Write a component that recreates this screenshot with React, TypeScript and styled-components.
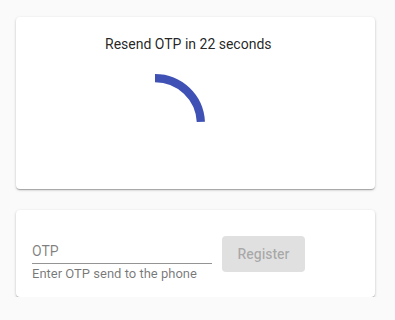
import styled, { createGlobalStyle } from 'styled-components'

const GlobalStyle = createGlobalStyle`
  html, body {
    margin: 0;
    padding: 0;
    background-color: #fafafa;
    font-family: Roboto, "Liberation Sans", sans-serif;
  }
`

const Page = styled.div`
  padding: 17px 20px 0 16px;
`

const Card = styled.div<{ $gap?: number }>`
  background-color: #fff;
  border-radius: 4px;
  box-shadow: 0px 1px 3px 0px rgba(0, 0, 0, 0.2), 0px 1px 1px 0px rgba(0, 0, 0, 0.14),
    0px 2px 1px -1px rgba(0, 0, 0, 0.12);
  margin-bottom: ${(p) => p.$gap ?? 0}px;
`

const TimerBody = styled.div`
  display: flex;
  flex-direction: column;
  align-items: flex-start;
  padding: 17px 16px 15px 89px;
`

const Countdown = styled.div`
  font-size: 14px;
  line-height: 20px;
  color: rgba(0, 0, 0, 0.87);
`

const Spinner = styled.svg`
  display: block;
  margin-top: 20px;
  width: 100px;
  height: 100px;
  color: #3f51b5;
`

const FormRow = styled.div`
  display: flex;
  align-items: flex-start;
  padding: 26px 16px 15px;
`

const Field = styled.div`
  display: flex;
  flex-direction: column;
  width: 180px;
  padding-top: 1px;
`

const Input = styled.input`
  font-family: inherit;
  font-size: 14px;
  line-height: 20px;
  height: 20px;
  padding: 4px 0 2px;
  margin: 0;
  border: none;
  border-bottom: 1px solid rgba(0, 0, 0, 0.42);
  background: transparent;
  outline: none;
  color: rgba(0, 0, 0, 0.87);
  &::placeholder {
    color: rgba(0, 0, 0, 0.5);
    opacity: 1;
  }
`

const Helper = styled.div`
  margin-top: 2px;
  font-size: 13px;
  line-height: 16px;
  color: rgba(0, 0, 0, 0.54);
`

const Button = styled.button`
  margin-left: 10px;
  width: 83px;
  height: 36px;
  border: none;
  border-radius: 4px;
  background-color: #e0e0e0;
  color: rgba(0, 0, 0, 0.26);
  font-family: inherit;
  font-size: 14px;
  font-weight: 500;
  padding: 0;
`

export default function App() {
  const r = 45.9
  const c = 50
  const end = (-2.6 * Math.PI) / 180
  const ex = c + r * Math.cos(end)
  const ey = c + r * Math.sin(end)
  return (
    <>
      <GlobalStyle />
      <Page>
        <Card $gap={21}>
          <TimerBody>
            <Countdown>Resend OTP in 22 seconds</Countdown>
            <Spinner viewBox="0 0 100 100">
              <path
                d={`M ${c} ${c - r} A ${r} ${r} 0 0 1 ${ex.toFixed(2)} ${ey.toFixed(2)}`}
                fill="none"
                stroke="currentColor"
                strokeWidth="8.2"
              />
            </Spinner>
          </TimerBody>
        </Card>
        <Card>
          <FormRow>
            <Field>
              <Input placeholder="OTP" />
              <Helper>Enter OTP send to the phone</Helper>
            </Field>
            <Button disabled>Register</Button>
          </FormRow>
        </Card>
      </Page>
    </>
  )
}
